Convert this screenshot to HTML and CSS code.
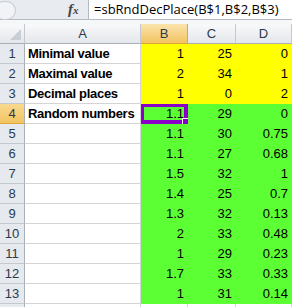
FILE: index.html
```html
<!DOCTYPE html>
<html lang="en">
<head>
    <meta charset="UTF-8">
    <title>sbRndDecPlace</title>
    <link rel="stylesheet" href="styles.css">
</head>
<body>
    <div class="formula-bar">
        <div class="name-box"><span class="knob"></span></div>
        <div class="fx"><i>f</i><span>x</span></div>
        <div class="formula">=sbRndDecPlace(B$1,B$2,B$3)</div>
    </div>
    <div class="gap"></div>

    <div class="sheet">
        <div class="corner"><span class="tri"></span></div>
        <div class="col-head">A</div>
        <div class="col-head active">B</div>
        <div class="col-head">C</div>
        <div class="col-head">D</div>

        <div class="row-head">1</div>
        <div class="cell label">Minimal value</div>
        <div class="cell num yellow">1</div>
        <div class="cell num yellow">25</div>
        <div class="cell num yellow">0</div>

        <div class="row-head">2</div>
        <div class="cell label">Maximal value</div>
        <div class="cell num yellow">2</div>
        <div class="cell num yellow">34</div>
        <div class="cell num yellow">1</div>

        <div class="row-head">3</div>
        <div class="cell label">Decimal places</div>
        <div class="cell num yellow">1</div>
        <div class="cell num yellow">0</div>
        <div class="cell num yellow">2</div>

        <div class="row-head active">4</div>
        <div class="cell label">Random numbers</div>
        <div class="cell num green selected">1.1<span class="handle"></span></div>
        <div class="cell num green">29</div>
        <div class="cell num green">0</div>

        <div class="row-head">5</div>
        <div class="cell"></div>
        <div class="cell num green">1.1</div>
        <div class="cell num green">30</div>
        <div class="cell num green">0.75</div>

        <div class="row-head">6</div>
        <div class="cell"></div>
        <div class="cell num green">1.1</div>
        <div class="cell num green">27</div>
        <div class="cell num green">0.68</div>

        <div class="row-head">7</div>
        <div class="cell"></div>
        <div class="cell num green">1.5</div>
        <div class="cell num green">32</div>
        <div class="cell num green">1</div>

        <div class="row-head">8</div>
        <div class="cell"></div>
        <div class="cell num green">1.4</div>
        <div class="cell num green">25</div>
        <div class="cell num green">0.7</div>

        <div class="row-head">9</div>
        <div class="cell"></div>
        <div class="cell num green">1.3</div>
        <div class="cell num green">32</div>
        <div class="cell num green">0.13</div>

        <div class="row-head">10</div>
        <div class="cell"></div>
        <div class="cell num green">2</div>
        <div class="cell num green">33</div>
        <div class="cell num green">0.48</div>

        <div class="row-head">11</div>
        <div class="cell"></div>
        <div class="cell num green">1</div>
        <div class="cell num green">29</div>
        <div class="cell num green">0.23</div>

        <div class="row-head">12</div>
        <div class="cell"></div>
        <div class="cell num green">1.7</div>
        <div class="cell num green">33</div>
        <div class="cell num green">0.33</div>

        <div class="row-head">13</div>
        <div class="cell"></div>
        <div class="cell num green">1</div>
        <div class="cell num green">31</div>
        <div class="cell num green">0.14</div>

        <div class="row-head"></div>
        <div class="cell"></div>
        <div class="cell"></div>
        <div class="cell"></div>
        <div class="cell"></div>
    </div>
</body>
</html>
```

FILE: styles.css
```css
body {
    margin: 0;
    font-family: 'Liberation Sans', Arial, sans-serif;
    color: #000;
    background: #fff;
    overflow: hidden;
}
.formula-bar {
    display: flex;
    height: 19px;
    background: #e8ebf0;
    border-bottom: 1px solid #b4bac3;
}
.name-box {
    width: 60px;
    position: relative;
}
.knob {
    position: absolute;
    left: -6px;
    top: 1px;
    width: 20px;
    height: 17px;
    border: 1px solid #c3c8cf;
    border-radius: 10px;
    background: #f1f3f6;
}
.fx {
    width: 28px;
    font-family: 'Liberation Serif', serif;
    font-weight: bold;
    color: #444;
    font-size: 15px;
    line-height: 19px;
    padding-left: 8px;
    box-sizing: border-box;
}
.fx span {
    font-size: 11px;
    font-style: italic;
}
.formula {
    flex: 1;
    background: #fff;
    border-left: 1px solid #b4bac3;
    padding-left: 5px;
    font-family: 'Open Sans', sans-serif;
    font-size: 13px;
    line-height: 19px;
    white-space: nowrap;
}
.gap {
    height: 4px;
    background: #f6f7f9;
}
.sheet {
    display: grid;
    grid-template-columns: 25px 116px 47px 48px 56px;
    grid-auto-rows: 20px;
    font-size: 13px;
}
.corner, .col-head {
    background: linear-gradient(#f8f9fa, #e4e7eb);
    border-right: 1px solid #c4c9cf;
    border-bottom: 1px solid #a9b0b8;
    box-sizing: border-box;
    position: relative;
}
.corner .tri {
    position: absolute;
    right: 3px;
    bottom: 3px;
    width: 0;
    height: 0;
    border-left: 11px solid transparent;
    border-bottom: 11px solid #c9ced4;
}
.col-head {
    text-align: center;
    line-height: 19px;
    color: #2b3a4e;
}
.col-head.active {
    background: linear-gradient(#fbe3ad, #f2c460);
    border-right-color: #e2a73c;
    border-bottom-color: #e2a73c;
}
.row-head {
    background: #e6e9ed;
    border-right: 1px solid #a9b0b8;
    border-bottom: 1px solid #c4c9cf;
    box-sizing: border-box;
    text-align: center;
    line-height: 19px;
    color: #2b3a4e;
}
.row-head.active {
    background: linear-gradient(#f9d98f, #f2c460);
    border-bottom-color: #e2a73c;
}
.cell {
    border-right: 1px solid #d4d4d4;
    border-bottom: 1px solid #d4d4d4;
    box-sizing: border-box;
    line-height: 19px;
    white-space: nowrap;
    position: relative;
}
.label {
    font-weight: bold;
    padding-left: 3px;
    letter-spacing: -0.3px;
}
.num {
    text-align: right;
    padding-right: 3px;
}
.yellow {
    background: #ffff00;
    border-color: #ffff00;
}
.green {
    background: #5cff33;
    border-color: #5cff33;
}
.selected {
    box-shadow: inset 0 0 0 3px #8a00c8;
    border-color: #8a00c8;
}
.handle {
    position: absolute;
    right: -3px;
    bottom: -3px;
    width: 6px;
    height: 6px;
    background: #8a00c8;
    border: 1px solid #fff;
}
```
